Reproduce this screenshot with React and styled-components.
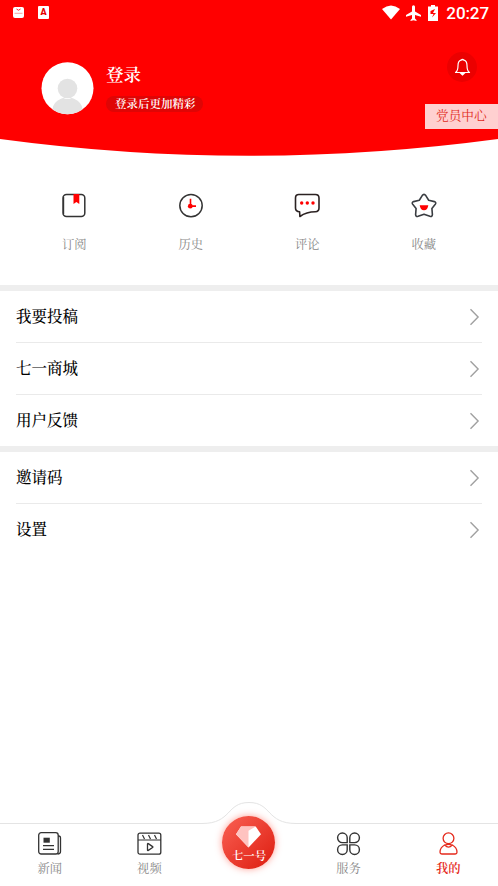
// App.jsx
import styled, { createGlobalStyle } from 'styled-components';

const GlobalStyle = createGlobalStyle`
  * {
    box-sizing: border-box;
  }

  body {
    margin: 0;
    background: #ffffff;
    font-family: "Liberation Serif", "Noto Serif CJK SC", "Noto Sans CJK SC", serif;
  }

  svg {
    display: block;
    flex-shrink: 0;
  }
`;

const Page = styled.div`
  display: flex;
  flex-direction: column;
  width: 498px;
  height: 886px;
  overflow: hidden;
  background: #ffffff;
`;

const Header = styled.header`
  position: relative;
  height: 156px;
  flex-shrink: 0;
  color: #ffffff;
`;

const HeaderCurve = styled.svg`
  position: absolute;
  inset: 0;
`;

const StatusBar = styled.div`
  position: relative;
  display: flex;
  align-items: center;
  justify-content: space-between;
  height: 25px;
  padding: 0 9px 0 13px;
`;

const StatusGroup = styled.div`
  display: flex;
  align-items: center;
`;

const Clock = styled.span`
  font-family: Roboto, sans-serif;
  font-size: 17px;
  line-height: 26px;
  font-weight: 500;
  letter-spacing: -0.1px;
  margin-left: 8px;
`;

const Profile = styled.div`
  position: relative;
  display: flex;
  padding: 37px 0 0 41px;
`;

const ProfileText = styled.div`
  display: flex;
  flex-direction: column;
  align-items: flex-start;
  margin-left: 12px;
`;

const ProfileName = styled.h1`
  margin: 1px 0 0;
  font-size: 17.5px;
  line-height: 24px;
  font-weight: 600;
`;

const ProfileHint = styled.span`
  height: 16px;
  margin-top: 9px;
  padding: 0 7.5px 0 9px;
  border-radius: 8px;
  background: #df0505;
  font-size: 11.5px;
  line-height: 16px;
  font-weight: 600;
  white-space: nowrap;
`;

const BellButton = styled.button`
  position: absolute;
  top: 52px;
  right: 21px;
  width: 30px;
  height: 30px;
  padding: 0;
  border: none;
  border-radius: 50%;
  background: #eb0000;
  display: flex;
  align-items: center;
  justify-content: center;
`;

const CenterTag = styled.div`
  position: absolute;
  top: 104px;
  right: 0;
  width: 73px;
  height: 25px;
  padding-left: 11px;
  background: #ffd0d0;
  color: #e02a20;
  font-size: 12.7px;
  line-height: 25px;
  white-space: nowrap;
`;

const Shortcuts = styled.section`
  display: grid;
  grid-template-columns: repeat(4, 1fr);
  height: 129px;
  flex-shrink: 0;
  padding: 37px 16px 0;
`;

const Shortcut = styled.div`
  display: flex;
  flex-direction: column;
  align-items: center;
`;

const ShortcutLabel = styled.span`
  margin-top: 17px;
  color: #888888;
  font-size: 12.3px;
  line-height: 20px;
`;

const MenuGroup = styled.section`
  border-top: 6px solid #eeeeee;
  padding: 0 16px;
`;

const MenuRow = styled.div`
  display: flex;
  align-items: center;
  justify-content: space-between;
  height: ${({ $last }) => ($last ? '51px' : '52px')};
  padding-right: 2px;
  border-bottom: ${({ $last }) => ($last ? 'none' : '1px solid #eaeaea')};
  color: #000000;
  font-size: 15.5px;
  line-height: 25px;
  font-weight: 500;
`;

const TabBar = styled.nav`
  position: relative;
  display: grid;
  grid-template-columns: repeat(5, 1fr);
  height: 85px;
  margin-top: auto;
  padding-top: 30px;
  flex-shrink: 0;
`;

const TabOutline = styled.svg`
  position: absolute;
  inset: 0;
`;

const Tab = styled.div`
  position: relative;
  display: flex;
  flex-direction: column;
  align-items: center;
  color: ${({ $active }) => ($active ? '#e52a1c' : '#888888')};
  font-size: 12.3px;
  line-height: 18px;
  font-weight: ${({ $active }) => ($active ? 600 : 400)};
`;

const TabLabel = styled.span`
  margin-top: 4px;
`;

const CenterTab = styled.div`
  position: relative;
  justify-self: center;
  display: flex;
  flex-direction: column;
  align-items: center;
  width: 53px;
  height: 53px;
  margin-top: -15px;
  padding-top: 10px;
  border-radius: 50%;
  background: linear-gradient(135deg, #f75a4d 10%, #e02316 90%);
  box-shadow: 0 0 7px rgba(255, 60, 40, 0.5);
  color: #ffffff;
  font-size: 11.4px;
  line-height: 16px;
  font-weight: 600;
  white-space: nowrap;
`;

const BagIcon = () => (
  <svg width="11" height="11" viewBox="0 0 11 11">
    <rect width="11" height="11" rx="2" fill="#fff" />
    <path d="M3.5 2q2 2.500 4 0" fill="none" stroke="#f23" strokeWidth="1" />
    <path d="M1.500 6.300h8" stroke="#f9a0a0" strokeWidth="1" />
  </svg>
);

const LetterBadge = styled.span`
  width: 11px;
  height: 13px;
  margin-left: 14px;
  border-radius: 1px;
  background: #ffffff;
  color: #e60000;
  font-family: Roboto, sans-serif;
  font-size: 9px;
  line-height: 13px;
  font-weight: 900;
  text-align: center;
`;

const WifiIcon = () => (
  <svg width="18" height="15" viewBox="0 0 18 15">
    <path d="M0 4Q9-3 18 4L9 14.5z" fill="#fff" />
  </svg>
);

const PlaneIcon = () => (
  <svg width="28" height="16" viewBox="0 0 28 16">
    <path d="M15 6.400V1.800a1.500 1.500 0 0 0-3 0v4.600L6 10v1.800l6-1.800v3.600L10.500 15v1l3-.8 3 .8v-1L15 13.600V10l6 1.800V10z" fill="#fff" />
  </svg>
);

const BatteryIcon = () => (
  <svg width="10" height="16" viewBox="0 0 10 16">
    <path d="M3 0h4v1.500h3V16H0V1.500h3z" fill="#fff" />
    <path d="M7 4 2.500 6v3h3L4 12.500 8 8H5z" fill="#f00" />
  </svg>
);

const Avatar = () => (
  <svg width="53" height="53" viewBox="0 0 53 53">
    <clipPath id="avatar">
      <circle cx="26.5" cy="26.2" r="26" />
    </clipPath>
    <circle cx="26.5" cy="26.2" r="26" fill="#fff" />
    <circle cx="26.5" cy="26.5" r="9.8" fill="#e3e3e3" />
    <path d="M11.500 47q1-7 8-10 3-1.500 4-.5 3 1 6 0 1-1 4 .5 7 3 8 10v6h-30z" fill="#e3e3e3" clipPath="url(#avatar)" />
  </svg>
);

const BellIcon = () => (
  <svg width="17" height="18" viewBox="0 0 17 18" fill="none" stroke="#fff" strokeWidth="1.2">
    <path d="M1.500 14.500Q4 13 4 7.500 4 3 7 2.200q1.500-1.400 3 0 3 .8 3 5.300 0 5.500 2.500 7z" strokeLinejoin="round" />
    <path d="M7 15.500h3L8.500 17z" fill="#fff" />
  </svg>
);

const BookIcon = () => (
  <svg width="24" height="25" viewBox="0 0 24 25">
    <rect x="1" y="1.6" width="21.8" height="21.8" rx="3.5" fill="none" stroke="#333" strokeWidth="1.5" />
    <path d="M1.600 4v17" stroke="#333" strokeWidth="1.2" />
    <path d="M11.500 1h5.800v10l-2.900-2-2.900 2z" fill="#f00" />
  </svg>
);

const ClockIcon = () => (
  <svg width="24" height="25" viewBox="0 0 24 25">
    <circle cx="12" cy="12.6" r="11.2" fill="none" stroke="#333" strokeWidth="1.5" />
    <path d="M11.500 5.800v7.300H17" fill="none" stroke="#f00" strokeWidth="1.6" />
    <circle cx="11.3" cy="13.2" r="2.4" fill="#f00" />
  </svg>
);

const CommentIcon = () => (
  <svg width="26" height="25" viewBox="0 0 26 25">
    <path
      d="M4.800 1.500h16.600q3.600 0 3.600 3.600v10q0 3.600-3.600 3.600-9 0-15.500 4.800l-.3-4.800Q1.500 18.500 1.500 15V5.100q0-3.600 3.300-3.600z"
      fill="none" stroke="#2b2222" strokeWidth="1.6" strokeLinejoin="round"
    />
    <circle cx="7.7" cy="10" r="1.7" fill="#f00" />
    <circle cx="13.3" cy="10" r="1.7" fill="#f00" />
    <circle cx="19" cy="10" r="1.7" fill="#f00" />
  </svg>
);

const StarIcon = () => (
  <svg width="26" height="25" viewBox="0 0 26 25">
    <path
      d="M11.200 2.600Q13 .2 14.800 2.600l2.900 4.600 5.700 1.400q2.200.8.9 2.700L20.900 15.400l.5 6.200q-.2 2.400-2.500 1.700L13 21.200 7.100 23.300q-2.300.7-2.500-1.700l.5-6.200-3.400-4.100q-1.300-1.900.9-2.700l5.700-1.400z"
      fill="none" stroke="#3a3d42" strokeWidth="1.6" strokeLinejoin="round"
    />
    <path d="M8.700 12.200h8.600q-.6 5-4.300 5t-4.300-5z" fill="#f00" />
  </svg>
);

const ChevronIcon = () => (
  <svg width="11" height="18" viewBox="0 0 11 18">
    <path d="m1.500 1.300 7.600 7.700-7.600 7.700" fill="none" stroke="#a0a0a0" strokeWidth="1.4" />
  </svg>
);

const NewsIcon = () => (
  <svg width="25" height="25" viewBox="0 0 25 25" fill="none" stroke="#333" strokeWidth="1.3">
    <path d="M21 5h.7q1.800 0 1.800 2v13.500q0 2.500-3 2.500" />
    <rect x="1.7" y="1.7" width="19.5" height="21.3" rx="2.5" />
    <path d="M6.500 6.700h6.300v5H6.500z" fill="#333" stroke="none" />
    <path d="M6 14.700h11M6 18.300h11" strokeWidth="1.2" />
  </svg>
);

const VideoIcon = () => (
  <svg width="25" height="25" viewBox="0 0 25 25" fill="none" stroke="#333" strokeWidth="1.3">
    <rect x="1" y="2.2" width="22.8" height="21" rx="2" />
    <path d="M1 9h23M5.500 4l2 4M11.500 4l2 4M17.500 4l2 4" strokeWidth="1.2" />
    <path d="M10.500 13q0-.8.8-.4l4.300 3q.6.500 0 1l-4.300 2.800q-.8.4-.8-.4z" />
  </svg>
);

const CloverIcon = () => (
  <svg width="25" height="25" viewBox="0 0 25 25" fill="none" stroke="#333" strokeWidth="1.4">
    <path d="M11.200 11.600H6.400a4.800 4.800 0 1 1 4.800-4.800z" />
    <path d="M13.800 11.600h4.800a4.800 4.800 0 1 0-4.800-4.800z" />
    <path d="M11.200 13.900H6.400a4.800 4.800 0 1 0 4.800 4.800z" />
    <path d="M13.800 13.900h4.800a4.800 4.800 0 1 1-4.800 4.800z" />
  </svg>
);

const UserIcon = () => (
  <svg width="25" height="25" viewBox="0 0 25 25" fill="none" stroke="#e52a1c" strokeWidth="1.3">
    <circle cx="12.5" cy="7.3" r="5.4" />
    <path d="M8.800 14Q4 16.400 4 21.200q0 1.800 1.800 1.800h13.400q1.800 0 1.800-1.800 0-4.800-4.800-7.200" />
    <path d="M8.800 14q3.700 4.300 7.400 0-3.700-1.200-7.400 0z" />
  </svg>
);

const DiamondIcon = () => (
  <svg width="25" height="22" viewBox="0 0 25 22">
    <path d="M5 .5h14.700L25 8.200 12.500 21.500 0 8.200z" fill="#fff" />
    <path d="M5 .5h14.700l-7.200 4.200v16.800L0 8.200z" fill="#ffc3c0" />
  </svg>
);

const shortcuts = [
  { label: '订阅', icon: <BookIcon /> },
  { label: '历史', icon: <ClockIcon /> },
  { label: '评论', icon: <CommentIcon /> },
  { label: '收藏', icon: <StarIcon /> },
];

const menuGroups = [
  ['我要投稿', '七一商城', '用户反馈'],
  ['邀请码', '设置'],
];

const App = () => {
  return (
    <>
      <GlobalStyle />
      <Page>
        <Header>
          <HeaderCurve width="498" height="156" viewBox="0 0 498 156">
            <path d="M0 0H498V139Q249 172.500 0 139z" fill="#f00" />
          </HeaderCurve>
          <StatusBar>
            <StatusGroup>
              <BagIcon />
              <LetterBadge>A</LetterBadge>
            </StatusGroup>
            <StatusGroup>
              <WifiIcon />
              <PlaneIcon />
              <BatteryIcon />
              <Clock>20:27</Clock>
            </StatusGroup>
          </StatusBar>
          <Profile>
            <Avatar />
            <ProfileText>
              <ProfileName>登录</ProfileName>
              <ProfileHint>登录后更加精彩</ProfileHint>
            </ProfileText>
          </Profile>
          <BellButton>
            <BellIcon />
          </BellButton>
          <CenterTag>党员中心</CenterTag>
        </Header>

        <Shortcuts>
          {shortcuts.map((item) => (
            <Shortcut key={item.label}>
              {item.icon}
              <ShortcutLabel>{item.label}</ShortcutLabel>
            </Shortcut>
          ))}
        </Shortcuts>

        {menuGroups.map((group, index) => (
          <MenuGroup key={index}>
            {group.map((label, row) => (
              <MenuRow key={label} $last={row === group.length - 1}>
                {label}
                <ChevronIcon />
              </MenuRow>
            ))}
          </MenuGroup>
        ))}

        <TabBar>
          <TabOutline width="498" height="85" viewBox="0 0 498 85">
            <path
              d="M0 22.500H202C232 22.500 226 1.500 249 1.500S266 22.500 296 22.500H498"
              fill="none" stroke="#e4e4e4"
            />
          </TabOutline>
          <Tab>
            <NewsIcon />
            <TabLabel>新闻</TabLabel>
          </Tab>
          <Tab>
            <VideoIcon />
            <TabLabel>视频</TabLabel>
          </Tab>
          <CenterTab>
            <DiamondIcon />
            七一号
          </CenterTab>
          <Tab>
            <CloverIcon />
            <TabLabel>服务</TabLabel>
          </Tab>
          <Tab $active>
            <UserIcon />
            <TabLabel>我的</TabLabel>
          </Tab>
        </TabBar>
      </Page>
    </>
  );
};

export default App;
